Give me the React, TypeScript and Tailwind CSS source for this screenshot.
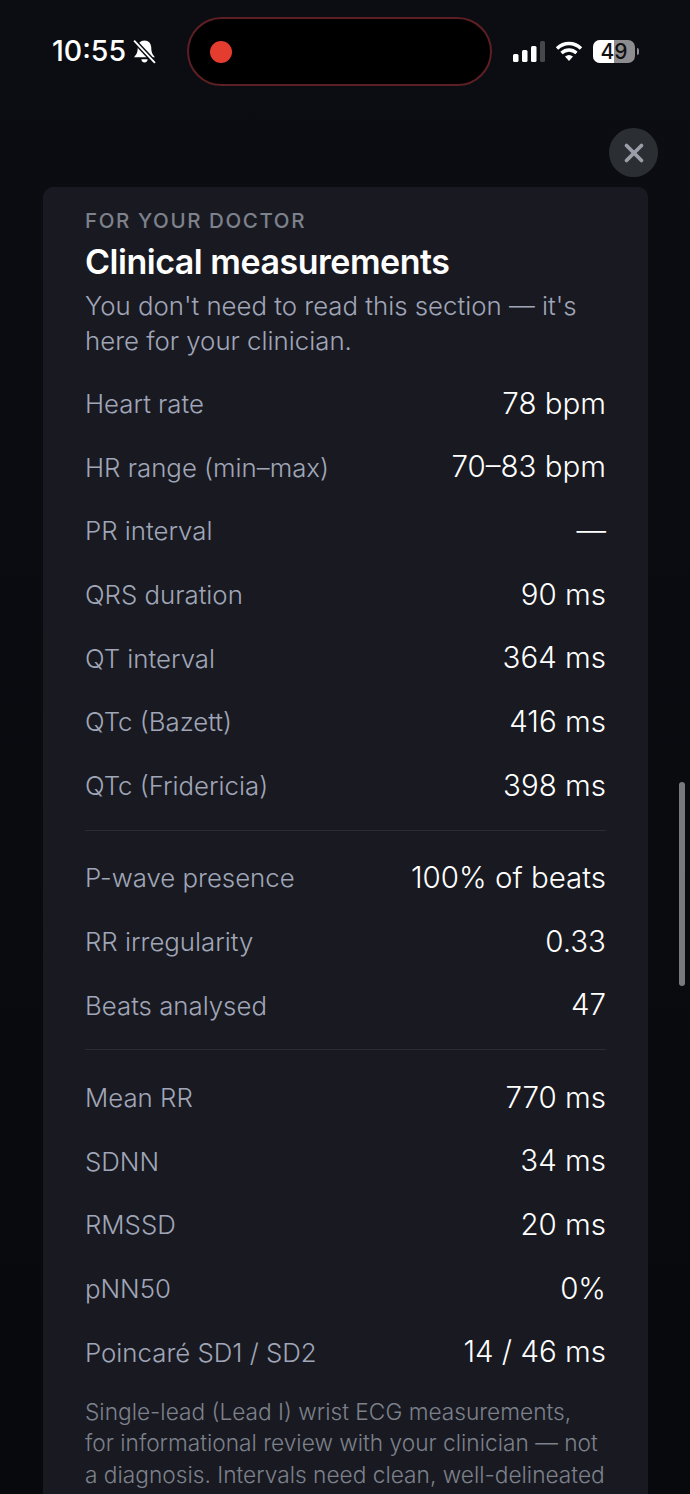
import { X } from "lucide-react";

const groups = [
  [
    ["Heart rate", "78 bpm"],
    ["HR range (min–max)", "70–83 bpm"],
    ["PR interval", "—"],
    ["QRS duration", "90 ms"],
    ["QT interval", "364 ms"],
    ["QTc (Bazett)", "416 ms"],
    ["QTc (Fridericia)", "398 ms"],
  ],
  [
    ["P-wave presence", "100% of beats"],
    ["RR irregularity", "0.33"],
    ["Beats analysed", "47"],
  ],
  [
    ["Mean RR", "770 ms"],
    ["SDNN", "34 ms"],
    ["RMSSD", "20 ms"],
    ["pNN50", "0%"],
    ["Poincaré SD1 / SD2", "14 / 46 ms"],
  ],
];

const Row = ({ label, value }: { label: string; value: string }) => (
  <div className="flex h-[63.7px] items-center justify-between">
    <span className="text-[25.800px] font-light text-[#a0a6b8]">{label}</span>
    <span className="-mt-[3px] text-[29.500px] font-light text-white">{value}</span>
  </div>
);

const StatusBar = () => (
  <div className="flex h-[103px] items-start pl-[52px] pt-[17px]">
    <div className="flex h-[68px] w-[135px] items-center gap-[6px] pt-[1px]">
      <span className="text-[28.500px] font-medium text-white">10:55</span>
      <svg width="25" height="25" viewBox="0 0 24 24" className="shrink-0">
        <path d="M12 1.500c-4 0-6.500 3-6.500 7 0 5-1.500 6.500-3.500 9h20c-2-2.500-3.500-4-3.500-9 0-4-2.500-7-6.500-7z" fill="#fff" />
        <path d="M9 19.500h6c0 2-1.200 3-3 3s-3-1-3-3z" fill="#fff" />
        <path d="M2 1.500 22 23" stroke="#0a0c11" strokeWidth="4.500" />
        <path d="M2 1.500 22 23" stroke="#fff" strokeWidth="1.800" />
      </svg>
    </div>
    <div className="flex h-[69px] w-[305px] items-center rounded-full border-2 border-[#5c1f23] bg-black pl-[21px]">
      <div className="size-[22px] rounded-full bg-[#e53c30]" />
    </div>
    <div className="ml-[21px] flex h-[68px] items-center">
      <svg width="32" height="21" viewBox="0 0 32 21" className="mt-[1px]">
        <rect x="0" y="13" width="5.500" height="8" rx="1.500" fill="#fff" />
        <rect x="9" y="9" width="5.500" height="12" rx="1.500" fill="#fff" />
        <rect x="18" y="5" width="5.500" height="16" rx="1.500" fill="#fff" />
        <rect x="27" y="0" width="5" height="21" rx="1.500" fill="#45474b" />
      </svg>
      <svg width="28" height="20" viewBox="0 0 28 20" className="ml-[10px]">
        <path d="M2 7.500C9 .8 19 .8 26 7.500" fill="none" stroke="#fff" strokeWidth="3.400" />
        <path d="M6.500 12C11 8 17 8 21.500 12" fill="none" stroke="#fff" strokeWidth="3.400" />
        <path d="M10 15.500c2.500-2 5.500-2 8 0L14 20z" fill="#fff" />
      </svg>
      <div className="relative ml-[10px] flex h-[23px] w-[42px] items-center justify-center overflow-hidden rounded-[7px] bg-[#8d8d8f]">
        <div className="absolute inset-y-0 left-0 w-[21px] bg-white" />
        <span className="relative text-[21px] font-medium leading-none text-[#111]">49</span>
      </div>
      <div className="ml-[2px] h-[7px] w-[2px] rounded-r-full bg-[#8d8d8f]" />
    </div>
  </div>
);

export default function App() {
  return (
    <div className="relative h-[1494px] w-[690px] overflow-hidden bg-gradient-to-b from-[#0b0d12] to-[#07090c] font-['Inter',sans-serif]">
      <StatusBar />
      <button className="absolute left-[609px] top-[128px] flex size-[49px] items-center justify-center rounded-full bg-[#2b2e33]">
        <X size={30} strokeWidth={3} className="text-[#9a9ea8]" />
      </button>
      <div className="absolute left-[679px] top-[782px] h-[204px] w-[6px] rounded-full bg-[#77797d]" />
      <main className="ml-[43px] mt-[84px] w-[605px] rounded-t-[10px] bg-[#191a21] px-[42px] pb-[40px] pt-[20px]">
        <div className="text-[20.500px] font-medium leading-[28px] tracking-[1.600px] text-[#7d818c]">FOR YOUR DOCTOR</div>
        <h2 className="mt-[6px] text-[34px] font-semibold leading-[42px] tracking-[-0.480px] text-white">Clinical measurements</h2>
        <p className="mt-[5px] text-[25.800px] font-light leading-[35px] text-[#a0a6b8]">
          You don't need to read this section — it's here for your clinician.
        </p>
        <div className="mt-[14.500px]">
          {groups.map((rows, i) => (
            <div key={i} className={i > 0 ? "mt-[11.500px] border-t border-[#2a2c33] pt-[16px]" : ""}>
              {rows.map(([label, value]) => (
                <Row key={label} label={label} value={value} />
              ))}
            </div>
          ))}
        </div>
        <p className="mt-[11px] whitespace-nowrap text-[22.700px] font-light leading-[31.500px] text-[#7d818c]">
          Single-lead (Lead I) wrist ECG measurements,
          <br />
          for informational review with your clinician — not
          <br />
          a diagnosis. Intervals need clean, well-delineated
        </p>
      </main>
    </div>
  );
}
